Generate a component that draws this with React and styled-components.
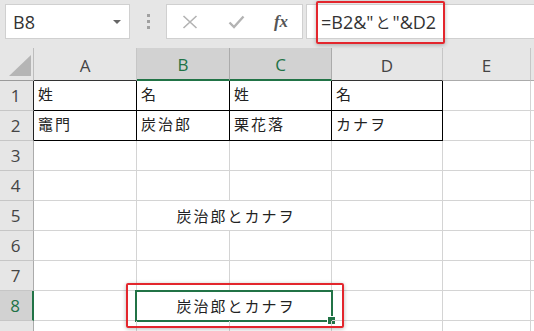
import styled, { createGlobalStyle } from "styled-components";

const GlobalStyle = createGlobalStyle`
  html, body {
    margin: 0;
    padding: 0;
    background: #ffffff;
    overflow: hidden;
  }
  * { box-sizing: border-box; }
`;

const GREEN = "#217346";
const GRID = "#d4d4d4";
const RED = "#e3262d";

const Page = styled.div`
  position: relative;
  width: 534px;
  height: 331px;
  overflow: hidden;
  background: #e6e6e6;
  font-family: "Open Sans", "Liberation Sans", sans-serif;
`;

const Toolbar = styled.div`
  display: flex;
  align-items: center;
  height: 48px;
  padding: 4px 0 9px 5px;
`;

const NameBox = styled.div`
  display: flex;
  align-items: center;
  justify-content: space-between;
  width: 125px;
  height: 35px;
  padding: 0 8px 0 7px;
  background: #fff;
  border: 1px solid #d0d0d0;
  font-size: 18px;
  color: #333;
`;

const Caret = styled.span`
  width: 0;
  height: 0;
  border-left: 4px solid transparent;
  border-right: 4px solid transparent;
  border-top: 4px solid #666;
`;

const Dots = styled.div`
  display: flex;
  flex-direction: column;
  gap: 3px;
  margin: 0 16px 0 17px;
  span {
    width: 3px;
    height: 3px;
    background: #a0a0a0;
  }
`;

const IconBox = styled.div`
  display: flex;
  align-items: center;
  width: 137px;
  height: 35px;
  background: #fff;
  border: 1px solid #d0d0d0;
  padding-left: 14px;
`;

const IconSlot = styled.div`
  display: flex;
  align-items: center;
  justify-content: center;
  width: ${(p) => p.$w}px;
`;

const Fx = styled.span`
  font-family: "Liberation Serif", "DejaVu Serif", serif;
  font-style: italic;
  font-weight: bold;
  font-size: 17px;
  color: #555;
`;

const FormulaInput = styled.div`
  flex: 1;
  display: flex;
  align-items: center;
  height: 35px;
  margin-left: 3px;
  padding-left: 14px;
  background: #fff;
  border: 1px solid #d0d0d0;
  border-right: none;
  font-size: 18px;
  color: #333;
  font-family: "Open Sans", "Noto Sans CJK JP", sans-serif;
  span {
    font-family: "Noto Sans CJK JP", sans-serif;
    font-size: 15px;
    margin: 0 2px;
  }
`;

const Sheet = styled.div`
  display: grid;
  grid-template-columns: 34px 103px 93px 102px 111px 88px 1fr;
  grid-template-rows: 33px repeat(9, 30px);
  background: #fff;
`;

const Corner = styled.div`
  position: relative;
  background: #e6e6e6;
  border-right: 1px solid #bdbdbd;
  border-bottom: 1px solid #9b9b9b;
  &::after {
    content: "";
    position: absolute;
    left: 9px;
    bottom: 4px;
    width: 0;
    height: 0;
    border-left: 22px solid transparent;
    border-bottom: 21px solid #b5b5b5;
  }
`;

const ColHead = styled.div`
  display: flex;
  align-items: center;
  justify-content: center;
  padding-top: 2px;
  background: ${(p) => (p.$sel ? "#d2d2d2" : "#e6e6e6")};
  color: ${(p) => (p.$sel ? GREEN : "#444")};
  border-right: 1px solid ${(p) => (p.$sel ? "#ababab" : "#c6c6c6")};
  border-bottom: ${(p) => (p.$sel ? `2px solid ${GREEN}` : `1px solid ${p.$dark ? "#333" : "#ababab"}`)};
  font-size: 17px;
`;

const RowHead = styled.div`
  display: flex;
  align-items: center;
  justify-content: center;
  padding-right: 2px;
  background: ${(p) => (p.$sel ? "#d2d2d2" : "#e6e6e6")};
  color: ${(p) => (p.$sel ? GREEN : "#444")};
  border-bottom: 1px solid #c6c6c6;
  border-right: ${(p) =>
    p.$sel ? `2px solid ${GREEN}` : `1px solid ${p.$dark ? "#222" : "#ababab"}`};
  font-size: 17px;
`;

const Cell = styled.div`
  position: relative;
  display: flex;
  align-items: center;
  justify-content: ${(p) => (p.$center ? "center" : "flex-start")};
  grid-column: span ${(p) => p.$span || 1};
  padding: 0 0 ${(p) => (p.$center ? 0 : 5)}px 4px;
  border-right: 1px solid ${(p) => (p.$boxed ? "#000" : GRID)};
  border-bottom: 1px solid ${(p) => (p.$boxed ? "#000" : GRID)};
  font-family: "Noto Sans CJK JP", sans-serif;
  font-size: 15px;
  letter-spacing: 2px;
  color: #222;
`;

const Selected = styled(Cell)`
  &::before {
    content: "";
    position: absolute;
    top: -1px;
    left: -2px;
    right: -2px;
    bottom: -2px;
    border: 2px solid ${GREEN};
    pointer-events: none;
  }
  &::after {
    content: "";
    position: absolute;
    right: -5px;
    bottom: -5px;
    width: 7px;
    height: 7px;
    background: ${GREEN};
    border: 1px solid #fff;
  }
`;

const Callout = styled.div`
  position: absolute;
  left: ${(p) => p.$x}px;
  top: ${(p) => p.$y}px;
  width: ${(p) => p.$w}px;
  height: ${(p) => p.$h}px;
  border: 2px solid ${RED};
  border-radius: 2px;
  box-shadow: 0 1px 4px rgba(0, 0, 0, 0.28);
  pointer-events: none;
`;

const cols = ["A", "B", "C", "D", "E", ""];
const data = [
  ["姓", "名", "姓", "名"],
  ["竈門", "炭治郎", "栗花落", "カナヲ"],
];

const XIcon = () => (
  <svg width="16" height="14" viewBox="0 0 16 14">
    <path d="M1.5 1 L14.5 13 M14.5 1 L1.5 13" stroke="#b3b3b3" strokeWidth="1.6" fill="none" />
  </svg>
);

const CheckIcon = () => (
  <svg width="17" height="14" viewBox="0 0 17 14">
    <path d="M1.5 7.5 L6 12 L15.5 1.5" stroke="#b3b3b3" strokeWidth="2.4" fill="none" />
  </svg>
);

const App = () => {
  const renderRow = (r) => {
    const cells = [];
    if (r <= 2) {
      data[r - 1].forEach((v, i) => (
        cells.push(<Cell key={i} $boxed>{v}</Cell>)
      ));
      cells.push(<Cell key="e" />, <Cell key="f" />);
    } else if (r === 5) {
      cells.push(
        <Cell key="a" />,
        <Cell key="bc" $span={2} $center>炭治郎とカナヲ</Cell>,
        <Cell key="d" />, <Cell key="e" />, <Cell key="f" />
      );
    } else if (r === 8) {
      cells.push(
        <Cell key="a" />,
        <Selected key="bc" $span={2} $center>炭治郎とカナヲ</Selected>,
        <Cell key="d" />, <Cell key="e" />, <Cell key="f" />
      );
    } else {
      for (let i = 0; i < 6; i++) cells.push(<Cell key={i} />);
    }
    return cells;
  };

  return (
    <>
      <GlobalStyle />
      <Page>
        <Toolbar>
          <NameBox>
            B8
            <Caret />
          </NameBox>
          <Dots>
            <span />
            <span />
            <span />
          </Dots>
          <IconBox>
            <IconSlot $w={17}><XIcon /></IconSlot>
            <IconSlot $w={30} />
            <IconSlot $w={17}><CheckIcon /></IconSlot>
            <IconSlot $w={26} />
            <IconSlot $w={20}><Fx>fx</Fx></IconSlot>
          </IconBox>
          <FormulaInput>
            =B2&amp;"<span>と</span>"&amp;D2
          </FormulaInput>
        </Toolbar>
        <Sheet>
          <Corner />
          {cols.map((c, i) => (
            <ColHead key={c + i} $sel={c === "B" || c === "C"} $dark={c === "A" || c === "D"}>
              {c}
            </ColHead>
          ))}
          {[1, 2, 3, 4, 5, 6, 7, 8, 9].map((r) => [
            <RowHead key={"h" + r} $sel={r === 8} $dark={r <= 2}>{r < 9 ? r : ""}</RowHead>,
            ...renderRow(r).map((el, i) => ({ ...el, key: r + "-" + i })),
          ])}
        </Sheet>
        <Callout $x={316} $y={1} $w={129} $h={43} />
        <Callout $x={126} $y={283} $w={218} $h={45} />
      </Page>
    </>
  );
};

export default App;
